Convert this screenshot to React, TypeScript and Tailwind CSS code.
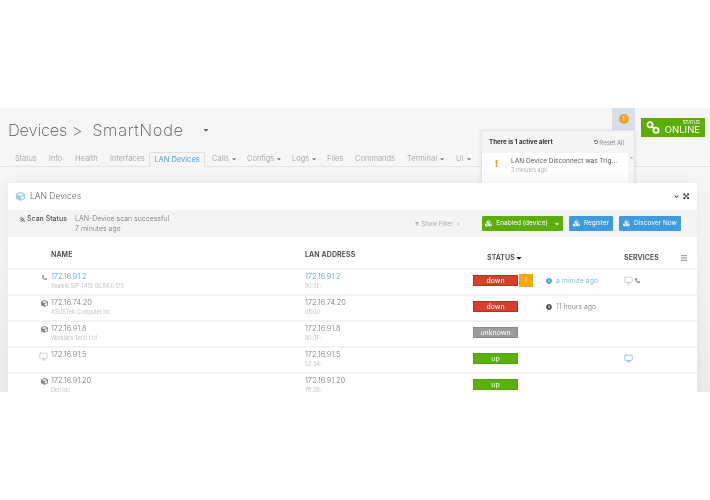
import React from "react";
import { FaCube, FaCubes, FaRss, FaClock, FaFilter, FaChevronDown, FaUndoAlt, FaPhoneAlt, FaExclamation, FaCaretDown, FaCaretLeft, FaCaretUp, FaExpandArrowsAlt } from "react-icons/fa";
import { Monitor, Menu } from "lucide-react";

const font = "font-['Inter','Liberation_Sans',sans-serif]";

const tabs: [string, boolean, string][] = [
  ["Status", false, "w-[34px]"],
  ["Info", false, "w-[26px]"],
  ["Health", false, "w-[35px]"],
  ["Interfaces", false, "w-[40px]"],
  ["Calls", true, "w-[35px]"],
  ["Configs", true, "w-[45px]"],
  ["Logs", true, "w-[35px]"],
  ["Files", false, "w-[28px]"],
  ["Commands", false, "w-[52px]"],
  ["Terminal", true, "w-[49px]"],
  ["UI", true, "w-[24px]"],
];

function Tab({ t }: { t: [string, boolean, string] }) {
  return (
    <div className={`${t[2]} shrink-0 flex items-center gap-[2px] text-[7.5px] leading-none text-[#999] font-light`}>
      <span className="whitespace-nowrap">{t[0]}</span>
      {t[1] && <FaCaretDown className="text-[6px] text-[#777]" />}
    </div>
  );
}

type Row = {
  icon: "phone" | "cube" | "monitor";
  name: string;
  sub: string;
  link?: boolean;
  mac: string;
  status: "down" | "unknown" | "up";
  alert?: boolean;
  time?: string;
  timeBlue?: boolean;
  services?: "both" | "blue";
};

const rows: Row[] = [
  { icon: "phone", name: "172.16.91.2", sub: "Yealink SIP-T41S 66.84.0.125", link: true, mac: "80:5E:", status: "down", alert: true, time: "a minute ago", timeBlue: true, services: "both" },
  { icon: "cube", name: "172.16.74.20", sub: "ASUSTek Computer Inc", mac: "08:60:", status: "down", time: "11 hours ago" },
  { icon: "cube", name: "172.16.91.8", sub: "Winstars Tech Ltd", mac: "80:3F:", status: "unknown" },
  { icon: "monitor", name: "172.16.91.5", sub: "", mac: "52:54:", status: "up", services: "blue" },
  { icon: "cube", name: "172.16.91.20", sub: "Dell Inc", mac: "78:2B:", status: "up" },
];

const statusCls: Record<Row["status"], string> = {
  down: "bg-[#d63f2e] border-[#c8281c]",
  unknown: "bg-[#9b9b9b] border-[#8a8a8a]",
  up: "bg-[#5cb00a] border-[#52a308]",
};

const grid = "grid grid-cols-[42px_255px_168px_73px_78px_73px]";

function DeviceRow({ r }: { r: Row }) {
  return (
    <div className={`${grid} h-[26px] border-t-2 border-[#f3f3f3] items-start`}>
      <div className="flex justify-end pr-[2px] pt-[4px] text-[#888]">
        {r.icon === "phone" && <FaPhoneAlt className="text-[5px] mt-[1px] mr-[1px]" />}
        {r.icon === "cube" && <FaCube className="text-[7px]" />}
        {r.icon === "monitor" && <Monitor size={9} strokeWidth={1} />}
      </div>
      <div className="pl-[1px] pt-[2px]">
        <div className={`text-[7.5px] leading-[10px] font-light tracking-[-0.1px] ${r.link ? "text-[#4a9fd8]" : "text-[#777]"}`}>{r.name}</div>
        <div className="text-[5.5px] leading-[9px] text-[#aaa] font-light">{r.sub}</div>
      </div>
      <div className="pt-[2px]">
        <div className={`text-[7.5px] leading-[10px] font-light tracking-[-0.1px] ${r.link ? "text-[#4a9fd8]" : "text-[#777]"}`}>{r.name}</div>
        <div className="text-[5.5px] leading-[9px] text-[#aaa] font-light">{r.mac}</div>
      </div>
      <div className="flex gap-[1px] pt-[5px]">
        <div className={`w-[45px] h-[11px] border flex items-center justify-center text-white text-[7px] leading-none ${statusCls[r.status]}`}>{r.status}</div>
        {r.alert && <div className="w-[14px] h-[13px] -mt-[1px] bg-[#f9a70f] flex items-center justify-center text-white text-[6.5px] leading-none">!</div>}
      </div>
      <div className="pt-[5px] h-[17px]">
        {r.time && (
          <div className={`flex items-center gap-[4px] h-full text-[7px] font-light ${r.timeBlue ? "text-[#6bb0de]" : "text-[#777]"}`}>
            <FaClock className={`text-[6px] ${r.timeBlue ? "text-[#4a9fd8]" : "text-[#555]"}`} />
            <span>{r.time}</span>
          </div>
        )}
      </div>
      <div className="flex items-center gap-[2px] pt-[5px] h-[16px]">
        {r.services === "both" && (
          <>
            <Monitor size={9} strokeWidth={1} className="text-[#888]" />
            <FaPhoneAlt className="text-[5px] text-[#777]" />
          </>
        )}
        {r.services === "blue" && <Monitor size={9} strokeWidth={1.5} className="text-[#4a9fd8]" />}
      </div>
    </div>
  );
}

function ActionButton({ cls, w, label, caret }: { cls: string; w: string; label: string; caret?: boolean }) {
  return (
    <div className={`${w} ${cls} h-[15px] rounded-[1px] flex items-center justify-center gap-[4px] text-white text-[6.5px] leading-none`}>
      <FaCubes className="text-[7px]" />
      <span className="whitespace-nowrap">{label}</span>
      {caret && <FaCaretDown className="text-[6px] ml-[2px]" />}
    </div>
  );
}

export default function App() {
  return (
    <div className={`w-[710px] h-[500px] bg-white overflow-hidden flex flex-col blur-[0.3px] ${font}`}>
      <div className="h-[108px] shrink-0" />
      <div className="relative h-[284px] shrink-0 overflow-hidden bg-gradient-to-b from-[#f6f6f6] via-[#f6f6f6] to-[#ececec] flex flex-col">
        <div className="h-[44px] shrink-0 flex items-start pl-[8px]">
          <div className="pt-[11px] flex items-center text-[#555] font-extralight text-[16.5px] leading-[22px]">
            <span className="tracking-[-0.2px]">Devices &gt;</span>
            <span className="ml-[10px] tracking-[0.7px]">SmartNode</span>
            <FaCaretDown className="ml-[18px] text-[8px] text-[#666]" />
          </div>
          <div className="ml-auto flex items-start">
            <div className="w-[23px] h-[22px] bg-[#d7e0e8] flex items-center justify-center">
              <div className="w-[10px] h-[10px] rounded-full bg-[#f0a22f] flex items-center justify-center text-white text-[6px] leading-none">1</div>
            </div>
            <div className="ml-[6px] mr-[5px] mt-[10px] w-[64px] h-[19px] bg-[#5cad0a] text-white flex items-center pl-[5px] pr-[5px]">
              <svg width="14" height="13" viewBox="0 0 14 13" fill="none" stroke="currentColor">
                <circle cx="4" cy="3.8" r="2.6" strokeWidth="1.8" />
                <circle cx="10" cy="9.2" r="2.6" strokeWidth="1.8" />
                <path d="M5.5 5.2 8.5 7.8" strokeWidth="1.8" />
              </svg>
              <div className="ml-auto flex flex-col items-end">
                <span className="text-[4.5px] leading-[5px]">STATUS</span>
                <span className="text-[9.5px] leading-[10px] font-normal">ONLINE</span>
              </div>
            </div>
          </div>
        </div>
        <div className="h-[14px] shrink-0 border-b border-[#e4e4e4] box-content flex items-end pl-[15px]">
          {tabs.slice(0, 4).map((t) => <div key={t[0]} className="h-full flex items-center"><Tab t={t} /></div>)}
          <div className="-ml-[1px] mr-[7px] w-[56px] h-[15px] -mb-[1px] bg-[#f6f6f6] border border-b-0 border-[#e0e0e0] rounded-t-[2px] flex items-center justify-center text-[7.5px] leading-none text-[#4a9fd8]">LAN Devices</div>
          {tabs.slice(4).map((t) => <div key={t[0]} className="h-full flex items-center"><Tab t={t} /></div>)}
        </div>
        <div className="relative z-10 mt-[16px] ml-[8px] w-[689px] bg-white shadow-[0_0_14px_rgba(0,0,0,0.07)] flex-1 overflow-hidden">
          <div className="h-[27px] flex items-center pl-[8px] pr-[8px]">
            <FaCube className="text-[9px] text-[#9cc9ea]" />
            <span className="ml-[5px] text-[8.5px] text-[#666] font-light">LAN Devices</span>
            <FaChevronDown className="ml-auto text-[5px] text-[#222]" />
            <FaExpandArrowsAlt className="ml-[4px] text-[6.5px] text-[#222]" />
          </div>
          <div className="h-[27px] bg-[#f4f4f4] flex items-center pl-[12px] pr-[16px]">
            <div className="self-start pt-[4px] flex items-center gap-[2px] text-[7px] leading-[10px] text-[#555] font-medium w-[55px]">
              <FaRss className="text-[5px]" />
              <span className="whitespace-nowrap">Scan Status</span>
            </div>
            <div className="text-[7px] leading-[10px] text-[#777] font-light">
              <div>LAN-Device scan successful</div>
              <div>7 minutes ago</div>
            </div>
            <div className="ml-auto flex items-center gap-[2px] text-[6px] text-[#aaa] mr-[22px]">
              <FaFilter className="text-[4px]" />
              <span>Show Filter</span>
              <FaCaretLeft className="text-[4px] ml-[1px]" />
            </div>
            <ActionButton cls="bg-[#5cad0a]" w="w-[81px]" label="Enabled (device)" caret />
            <ActionButton cls="bg-[#3f9bdc] ml-[6px]" w="w-[44px]" label="Register" />
            <ActionButton cls="bg-[#3f9bdc] ml-[6px]" w="w-[62px]" label="Discover Now" />
          </div>
          <div className={`${grid} h-[31px] items-center text-[7px] font-semibold text-[#444] tracking-[0.1px]`}>
            <div />
            <div className="pl-[1px] mt-[5px]">NAME</div>
            <div className="mt-[5px]">LAN ADDRESS</div>
            <div className="flex items-center pl-[14px] mt-[11px]">STATUS<FaCaretDown className="text-[8px] text-[#222]" /></div>
            <div />
            <div className="flex items-center justify-between pr-[9px] mt-[11px]">
              <span>SERVICES</span>
              <Menu size={8} strokeWidth={2} className="text-[#555]" />
            </div>
          </div>
          {rows.map((r) => <DeviceRow key={r.name} r={r} />)}
        </div>
        <div className="absolute z-0 left-[481px] top-[22px] w-[154px] h-[60px] bg-[#f5f5f5] border border-[#e3e3e3] shadow-[0_1px_4px_rgba(0,0,0,0.1)]">
          <div className="h-[22px] flex items-center justify-between pl-[7px] pr-[10px]">
            <span className="text-[6.2px] font-bold text-[#333]">There is 1 active alert</span>
            <span className="flex items-center gap-[1px] text-[6px] text-[#888]"><FaUndoAlt className="text-[4px] text-[#444]" />Reset All</span>
          </div>
          <div className="w-[146px] h-[40px] bg-white flex items-start pt-[4px] pl-[11px] relative">
            <FaExclamation className="text-[7px] text-[#f0a22f] mt-[3px]" />
            <div className="ml-[11px]">
              <div className="text-[6.5px] leading-[9px] text-[#555] w-[109px] whitespace-nowrap overflow-hidden text-ellipsis">LAN Device Disconnect was Triggered</div>
              <div className="text-[5.5px] leading-[8px] text-[#999] font-light">3 minutes ago</div>
            </div>
            <FaCaretUp className="absolute -right-[6px] top-[2px] text-[5px] text-[#aaa]" />
          </div>
        </div>
      </div>
    </div>
  );
}
